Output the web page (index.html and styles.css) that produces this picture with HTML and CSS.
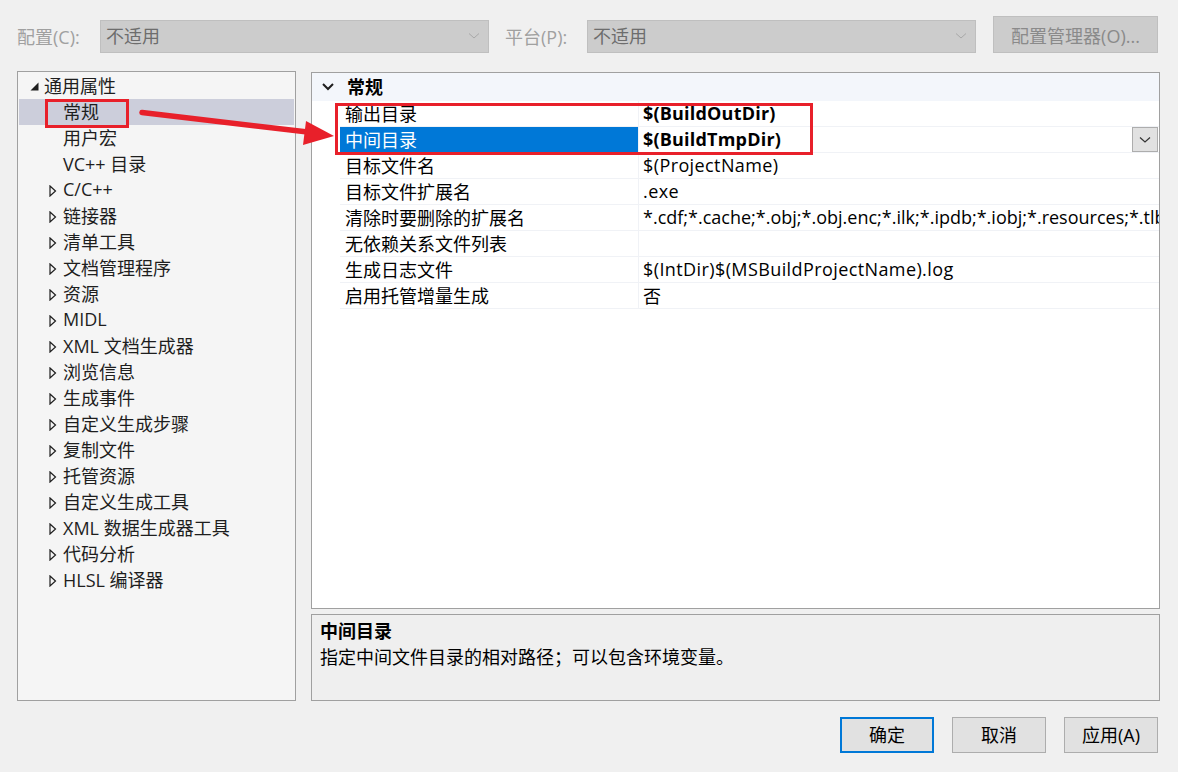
FILE: index.html
```html
<!DOCTYPE html>
<html lang="zh-CN">
<head>
<meta charset="utf-8">
<title>属性页</title>
<link rel="stylesheet" href="styles.css">
</head>
<body>
<div class="page">
  <div class="topbar">
    <span class="lbl">配置(C):</span>
    <div class="combo"><span>不适用</span><svg class="chev" width="12" height="8" viewBox="0 0 12 8"><path d="M1 1.5 L6 6 L11 1.5" fill="none" stroke="#a8a8a8" stroke-width="1"/></svg></div>
    <span class="lbl lbl2">平台(P):</span>
    <div class="combo"><span>不适用</span><svg class="chev" width="12" height="8" viewBox="0 0 12 8"><path d="M1 1.5 L6 6 L11 1.5" fill="none" stroke="#a8a8a8" stroke-width="1"/></svg></div>
    <div class="mgr">配置管理器(O)...</div>
  </div>

  <div class="main">
    <div class="tree">
      <div class="trow l0"><span class="exp"><svg width="9" height="9" viewBox="0 0 9 9"><polygon points="8.5,0.5 8.5,8.5 0.5,8.5" fill="#1e1e1e"/></svg></span><span>通用属性</span></div>
      <div class="trow l1 sel"><span class="exp"></span><span>常规</span></div>
      <div class="trow l1"><span class="exp"></span><span>用户宏</span></div>
      <div class="trow l1"><span class="exp"></span><span>VC++ 目录</span></div>
      <div class="trow l1"><span class="exp"><svg class="col" width="8" height="12" viewBox="0 0 8 12"><polygon points="1,1 6.5,6 1,11" fill="none" stroke="#1e1e1e" stroke-width="1.2"/></svg></span><span>C/C++</span></div>
      <div class="trow l1"><span class="exp"><svg class="col" width="8" height="12" viewBox="0 0 8 12"><polygon points="1,1 6.5,6 1,11" fill="none" stroke="#1e1e1e" stroke-width="1.2"/></svg></span><span>链接器</span></div>
      <div class="trow l1"><span class="exp"><svg class="col" width="8" height="12" viewBox="0 0 8 12"><polygon points="1,1 6.5,6 1,11" fill="none" stroke="#1e1e1e" stroke-width="1.2"/></svg></span><span>清单工具</span></div>
      <div class="trow l1"><span class="exp"><svg class="col" width="8" height="12" viewBox="0 0 8 12"><polygon points="1,1 6.5,6 1,11" fill="none" stroke="#1e1e1e" stroke-width="1.2"/></svg></span><span>文档管理程序</span></div>
      <div class="trow l1"><span class="exp"><svg class="col" width="8" height="12" viewBox="0 0 8 12"><polygon points="1,1 6.5,6 1,11" fill="none" stroke="#1e1e1e" stroke-width="1.2"/></svg></span><span>资源</span></div>
      <div class="trow l1"><span class="exp"><svg class="col" width="8" height="12" viewBox="0 0 8 12"><polygon points="1,1 6.5,6 1,11" fill="none" stroke="#1e1e1e" stroke-width="1.2"/></svg></span><span>MIDL</span></div>
      <div class="trow l1"><span class="exp"><svg class="col" width="8" height="12" viewBox="0 0 8 12"><polygon points="1,1 6.5,6 1,11" fill="none" stroke="#1e1e1e" stroke-width="1.2"/></svg></span><span>XML 文档生成器</span></div>
      <div class="trow l1"><span class="exp"><svg class="col" width="8" height="12" viewBox="0 0 8 12"><polygon points="1,1 6.5,6 1,11" fill="none" stroke="#1e1e1e" stroke-width="1.2"/></svg></span><span>浏览信息</span></div>
      <div class="trow l1"><span class="exp"><svg class="col" width="8" height="12" viewBox="0 0 8 12"><polygon points="1,1 6.5,6 1,11" fill="none" stroke="#1e1e1e" stroke-width="1.2"/></svg></span><span>生成事件</span></div>
      <div class="trow l1"><span class="exp"><svg class="col" width="8" height="12" viewBox="0 0 8 12"><polygon points="1,1 6.5,6 1,11" fill="none" stroke="#1e1e1e" stroke-width="1.2"/></svg></span><span>自定义生成步骤</span></div>
      <div class="trow l1"><span class="exp"><svg class="col" width="8" height="12" viewBox="0 0 8 12"><polygon points="1,1 6.5,6 1,11" fill="none" stroke="#1e1e1e" stroke-width="1.2"/></svg></span><span>复制文件</span></div>
      <div class="trow l1"><span class="exp"><svg class="col" width="8" height="12" viewBox="0 0 8 12"><polygon points="1,1 6.5,6 1,11" fill="none" stroke="#1e1e1e" stroke-width="1.2"/></svg></span><span>托管资源</span></div>
      <div class="trow l1"><span class="exp"><svg class="col" width="8" height="12" viewBox="0 0 8 12"><polygon points="1,1 6.5,6 1,11" fill="none" stroke="#1e1e1e" stroke-width="1.2"/></svg></span><span>自定义生成工具</span></div>
      <div class="trow l1"><span class="exp"><svg class="col" width="8" height="12" viewBox="0 0 8 12"><polygon points="1,1 6.5,6 1,11" fill="none" stroke="#1e1e1e" stroke-width="1.2"/></svg></span><span>XML 数据生成器工具</span></div>
      <div class="trow l1"><span class="exp"><svg class="col" width="8" height="12" viewBox="0 0 8 12"><polygon points="1,1 6.5,6 1,11" fill="none" stroke="#1e1e1e" stroke-width="1.2"/></svg></span><span>代码分析</span></div>
      <div class="trow l1"><span class="exp"><svg class="col" width="8" height="12" viewBox="0 0 8 12"><polygon points="1,1 6.5,6 1,11" fill="none" stroke="#1e1e1e" stroke-width="1.2"/></svg></span><span>HLSL 编译器</span></div>
    </div>

    <div class="right">
      <div class="grid">
        <div class="ghead">
          <span class="gchev"><svg width="12" height="8" viewBox="0 0 12 8"><path d="M1 1 L6 6 L11 1" fill="none" stroke="#1e1e1e" stroke-width="2"/></svg></span>
          <span class="gtitle">常规</span>
        </div>
        <div class="prow"><div class="pname">输出目录</div><div class="pval b">$(BuildOutDir)</div></div>
        <div class="prow"><div class="pname selname">中间目录</div><div class="pval b">$(BuildTmpDir)</div><div class="ddbtn"><svg width="12" height="8" viewBox="0 0 12 8"><path d="M1 1.5 L6 6 L11 1.5" fill="none" stroke="#333" stroke-width="1.2"/></svg></div></div>
        <div class="prow"><div class="pname">目标文件名</div><div class="pval">$(ProjectName)</div></div>
        <div class="prow"><div class="pname">目标文件扩展名</div><div class="pval">.exe</div></div>
        <div class="prow"><div class="pname">清除时要删除的扩展名</div><div class="pval tight">*.cdf;*.cache;*.obj;*.obj.enc;*.ilk;*.ipdb;*.iobj;*.resources;*.tlb;*.tli;*.tlh;*.tmp;*.rsp;*.pgc;*.pgd;*.meta;*.tlog</div></div>
        <div class="prow"><div class="pname">无依赖关系文件列表</div><div class="pval"></div></div>
        <div class="prow"><div class="pname">生成日志文件</div><div class="pval">$(IntDir)$(MSBuildProjectName).log</div></div>
        <div class="prow"><div class="pname">启用托管增量生成</div><div class="pval">否</div></div>
      </div>
      <div class="desc">
        <div class="dtitle">中间目录</div>
        <div class="dtext">指定中间文件目录的相对路径；可以包含环境变量。</div>
      </div>
    </div>
  </div>

  <div class="footer">
    <div class="btn default">确定</div>
    <div class="btn">取消</div>
    <div class="btn">应用(A)</div>
  </div>

  <div class="mark mark-tree"></div>
  <div class="mark mark-grid"></div>
  <svg class="arrow" width="1178" height="772" viewBox="0 0 1178 772">
    <line x1="142" y1="112.5" x2="312" y2="132.5" stroke="#e8202a" stroke-width="5.5" stroke-linecap="round"/>
    <polygon points="334,136 306,121 303,145" fill="#e8202a"/>
  </svg>
</div>
</body>
</html>
```
FILE: styles.css
```css
* { box-sizing: border-box; }
html, body { margin: 0; padding: 0; }
body {
  background: #f0f0f0;
  font-family: "Open Sans", "Noto Sans CJK SC", sans-serif;
  font-size: 18px;
  color: #000;
}
.page {
  position: relative;
  width: 1178px;
  height: 772px;
  overflow: hidden;
}

/* top bar */
.topbar {
  height: 71px;
  display: flex;
  align-items: center;
  padding-left: 17px;
}
.lbl {
  color: #a0a0a0;
  width: 83px;
  white-space: nowrap;
  margin-top: 0;
}
.lbl2 { width: 82px; margin-left: 16px; }
.combo {
  width: 389px;
  height: 33px;
  margin-top: 1px;
  background: #cccccc;
  border: 1px solid #bfbfbf;
  display: flex;
  align-items: center;
  justify-content: space-between;
  padding: 0 8px 0 5px;
  color: #6d6d6d;
}
.combo span { margin-top: -2px; }
.mgr {
  margin-left: 17px;
  width: 165px;
  height: 37px;
  margin-top: -2px;
  background: #cccccc;
  border: 1px solid #bfbfbf;
  color: #8a8a8a;
  display: flex;
  align-items: center;
  justify-content: center;
}

/* main */
.main {
  display: flex;
  gap: 15px;
  padding-left: 17px;
  height: 630px;
}
.tree {
  width: 279px;
  height: 630px;
  background: #f5f5f5;
  border: 1px solid #a0a0a0;
  padding: 1px 1px 0 1px;
  color: #1e1e1e;
}
.trow {
  height: 26px;
  display: flex;
  align-items: center;
  white-space: nowrap;
}
.trow > span:last-child { margin-top: -2px; }
.trow.l0 { padding-left: 10px; }
.trow.l1 { padding-left: 29px; }
.trow.sel { background: #cccedb; }
.exp {
  width: 15px;
  height: 26px;
  display: flex;
  align-items: center;
  padding-left: 1px;
}
.exp .col { margin-top: 1px; }

.right {
  width: 849px;
  display: flex;
  flex-direction: column;
  gap: 5px;
  padding-top: 1px;
}
.grid {
  height: 538px;
  background: #fff;
  border: 1px solid #a0a0a0;
  overflow: hidden;
}
.ghead {
  height: 28px;
  background: #f3f6fb;
  display: flex;
  align-items: center;
}
.gchev {
  width: 35px;
  padding-left: 10px;
  display: flex;
  align-items: center;
}
.gtitle { font-weight: bold; margin-top: -2px; }
.prow {
  position: relative;
  height: 26px;
  margin-left: 28px;
  display: flex;
  border-bottom: 1px solid #f0f2f6;
  white-space: nowrap;
}
.pname {
  width: 299px;
  padding-left: 5px;
  padding-bottom: 2px;
  border-right: 1px solid #f0f2f6;
  display: flex;
  align-items: center;
}
.pname.selname {
  background: #0078d7;
  color: #fff;
}
.pval {
  flex: 1;
  padding-left: 4px;
  padding-bottom: 2px;
  display: flex;
  align-items: center;
  overflow: hidden;
  letter-spacing: 0.4px;
}
.pval.b { font-weight: bold; letter-spacing: 0.2px; }
.pval.tight { letter-spacing: 0; }
.ddbtn {
  position: absolute;
  right: 1px;
  top: 0;
  width: 26px;
  height: 25px;
  background: #e1e1e1;
  border: 1px solid #adadad;
  display: flex;
  align-items: center;
  justify-content: center;
}
.desc {
  height: 87px;
  background: #efefef;
  border: 1px solid #a0a0a0;
  padding: 3px 8px;
  line-height: 26px;
}
.dtitle { font-weight: bold; }

/* footer */
.footer {
  display: flex;
  justify-content: flex-end;
  gap: 18px;
  padding: 16px 20px 0 0;
}
.btn {
  width: 94px;
  height: 36px;
  background: #e1e1e1;
  border: 1px solid #adadad;
  display: flex;
  align-items: center;
  justify-content: center;
  padding-bottom: 2px;
}
.btn.default { border: 2px solid #0078d7; }

/* annotations */
.mark {
  position: absolute;
  border: 3px solid #e8202a;
}
.mark-tree { left: 45px; top: 99px; width: 84px; height: 29px; }
.mark-grid { left: 335px; top: 103px; width: 478px; height: 52px; }
.arrow { position: absolute; left: 0; top: 0; pointer-events: none; }
```
